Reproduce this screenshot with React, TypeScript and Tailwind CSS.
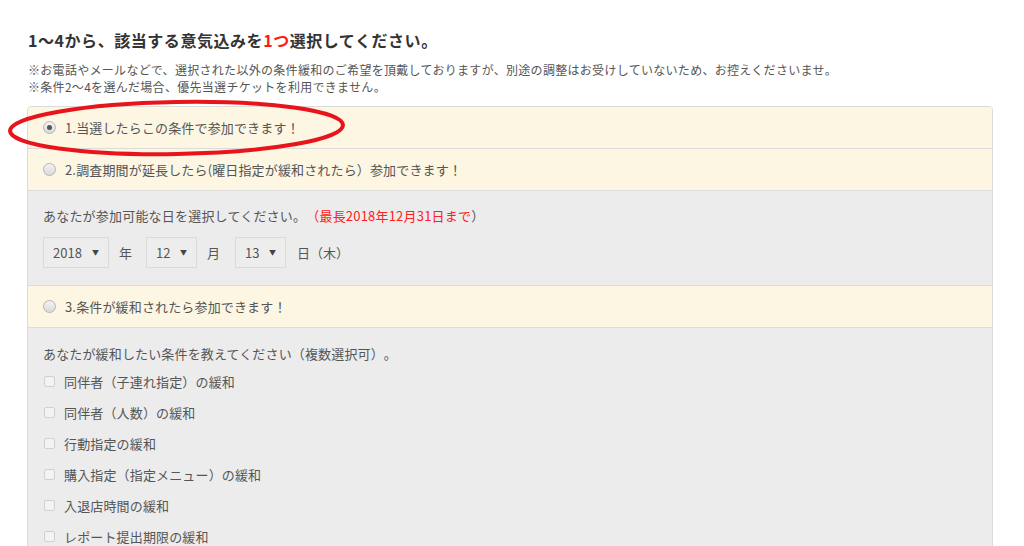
import React from "react";

const font = { fontFamily: '"Noto Sans CJK JP", "Noto Sans", sans-serif' };

function Radio({ checked }: { checked?: boolean }) {
  return (
    <span className="relative inline-flex h-[13px] w-[13px] shrink-0 items-center justify-center rounded-full border border-[#b5b5b5] bg-gradient-to-b from-[#f4f4f4] to-[#d9d9d9]">
      {checked && <span className="h-[5px] w-[5px] rounded-full bg-[#555]" />}
    </span>
  );
}

function Check() {
  return <span className="inline-block h-[11px] w-[11px] shrink-0 rounded-[2px] border border-[#d0d0d0] bg-[#f3f3f3]" />;
}

function YRow({ children, checked }: { children: React.ReactNode; checked?: boolean }) {
  return (
    <div className="flex h-[42px] items-center gap-[9px] border-b border-[#dcdcdc] bg-[#fcf6e3] pl-[15px] text-[13px] tracking-[0.15px] text-[#555]">
      <Radio checked={checked} />
      <span>{children}</span>
    </div>
  );
}

function Select({ value, w }: { value: string; w: string }) {
  return (
    <div className={`flex h-[31px] items-center justify-between border border-[#dadada] bg-[#ededed] pl-[9px] pr-[9px] text-[13px] text-[#555] ${w}`}>
      <span>{value}</span>
      <span className="text-[7px] text-[#444]">▼</span>
    </div>
  );
}

export default function App() {
  const checks = [
    "同伴者（子連れ指定）の緩和",
    "同伴者（人数）の緩和",
    "行動指定の緩和",
    "購入指定（指定メニュー）の緩和",
    "入退店時間の緩和",
    "レポート提出期限の緩和",
  ];
  return (
    <div className="relative h-[546px] overflow-hidden bg-white [text-spacing-trim:space-all]" style={font}>
      <div className="pl-[27px] pr-[31px] pt-[29px]">
        <h2 className="pl-[1px] text-[16px] font-bold leading-[22px] tracking-[0.55px] text-[#333]">
          1〜4から、該当する意気込みを<span className="text-[#ff1a1a]">1つ</span>選択してください。
        </h2>
        <div className="mt-[10px] pl-[1px] text-[12px] leading-[17px] tracking-[0.3px] text-[#555]">
          <p>※お電話やメールなどで、選択された以外の条件緩和のご希望を頂戴しておりますが、別途の調整はお受けしていないため、お控えくださいませ。</p>
          <p>※条件2〜4を選んだ場合、優先当選チケットを利用できません。</p>
        </div>
        <div className="mt-[11px] overflow-hidden rounded-t-[4px] border border-[#dcdcdc]">
          <YRow checked>1.当選したらこの条件で参加できます！</YRow>
          <YRow>2.調査期間が延長したら(曜日指定が緩和されたら）参加できます！</YRow>
          <div className="border-b border-[#dcdcdc] bg-[#ececec] pb-[17px] pl-[15px] pt-[15px] text-[13px] text-[#555]">
            <p className="leading-[20px] tracking-[0.2px]">
              あなたが参加可能な日を選択してください。<span className="text-[#ff2020]">（最長2018年12月31日まで</span>）
            </p>
            <div className="mt-[11px] flex items-center">
              <Select value="2018" w="w-[66px]" />
              <span className="ml-[10px] mr-[14px]">年</span>
              <Select value="12" w="w-[51px]" />
              <span className="ml-[10px] mr-[15px]">月</span>
              <Select value="13" w="w-[51px]" />
              <span className="ml-[11px]">日（木）</span>
            </div>
          </div>
          <YRow>3.条件が緩和されたら参加できます！</YRow>
          <div className="h-[300px] bg-[#ececec] pl-[15px] pt-[16px] text-[13px] tracking-[0.15px] text-[#555]">
            <p className="leading-[20px]">あなたが緩和したい条件を教えてください（複数選択可）。</p>
            <div className="mt-[2px] flex flex-col">
              {checks.map((c) => (
                <div key={c} className="flex h-[31px] items-center gap-[9px] pl-[1px]">
                  <Check />
                  <span>{c}</span>
                </div>
              ))}
            </div>
          </div>
        </div>
      </div>
      <svg className="pointer-events-none absolute left-0 top-[95px]" width="360" height="66" viewBox="0 0 360 66">
        <ellipse cx="176.5" cy="33" rx="166.5" ry="26" fill="none" stroke="#e8141b" strokeWidth="4" transform="rotate(-1 176.5 33)" />
      </svg>
    </div>
  );
}
